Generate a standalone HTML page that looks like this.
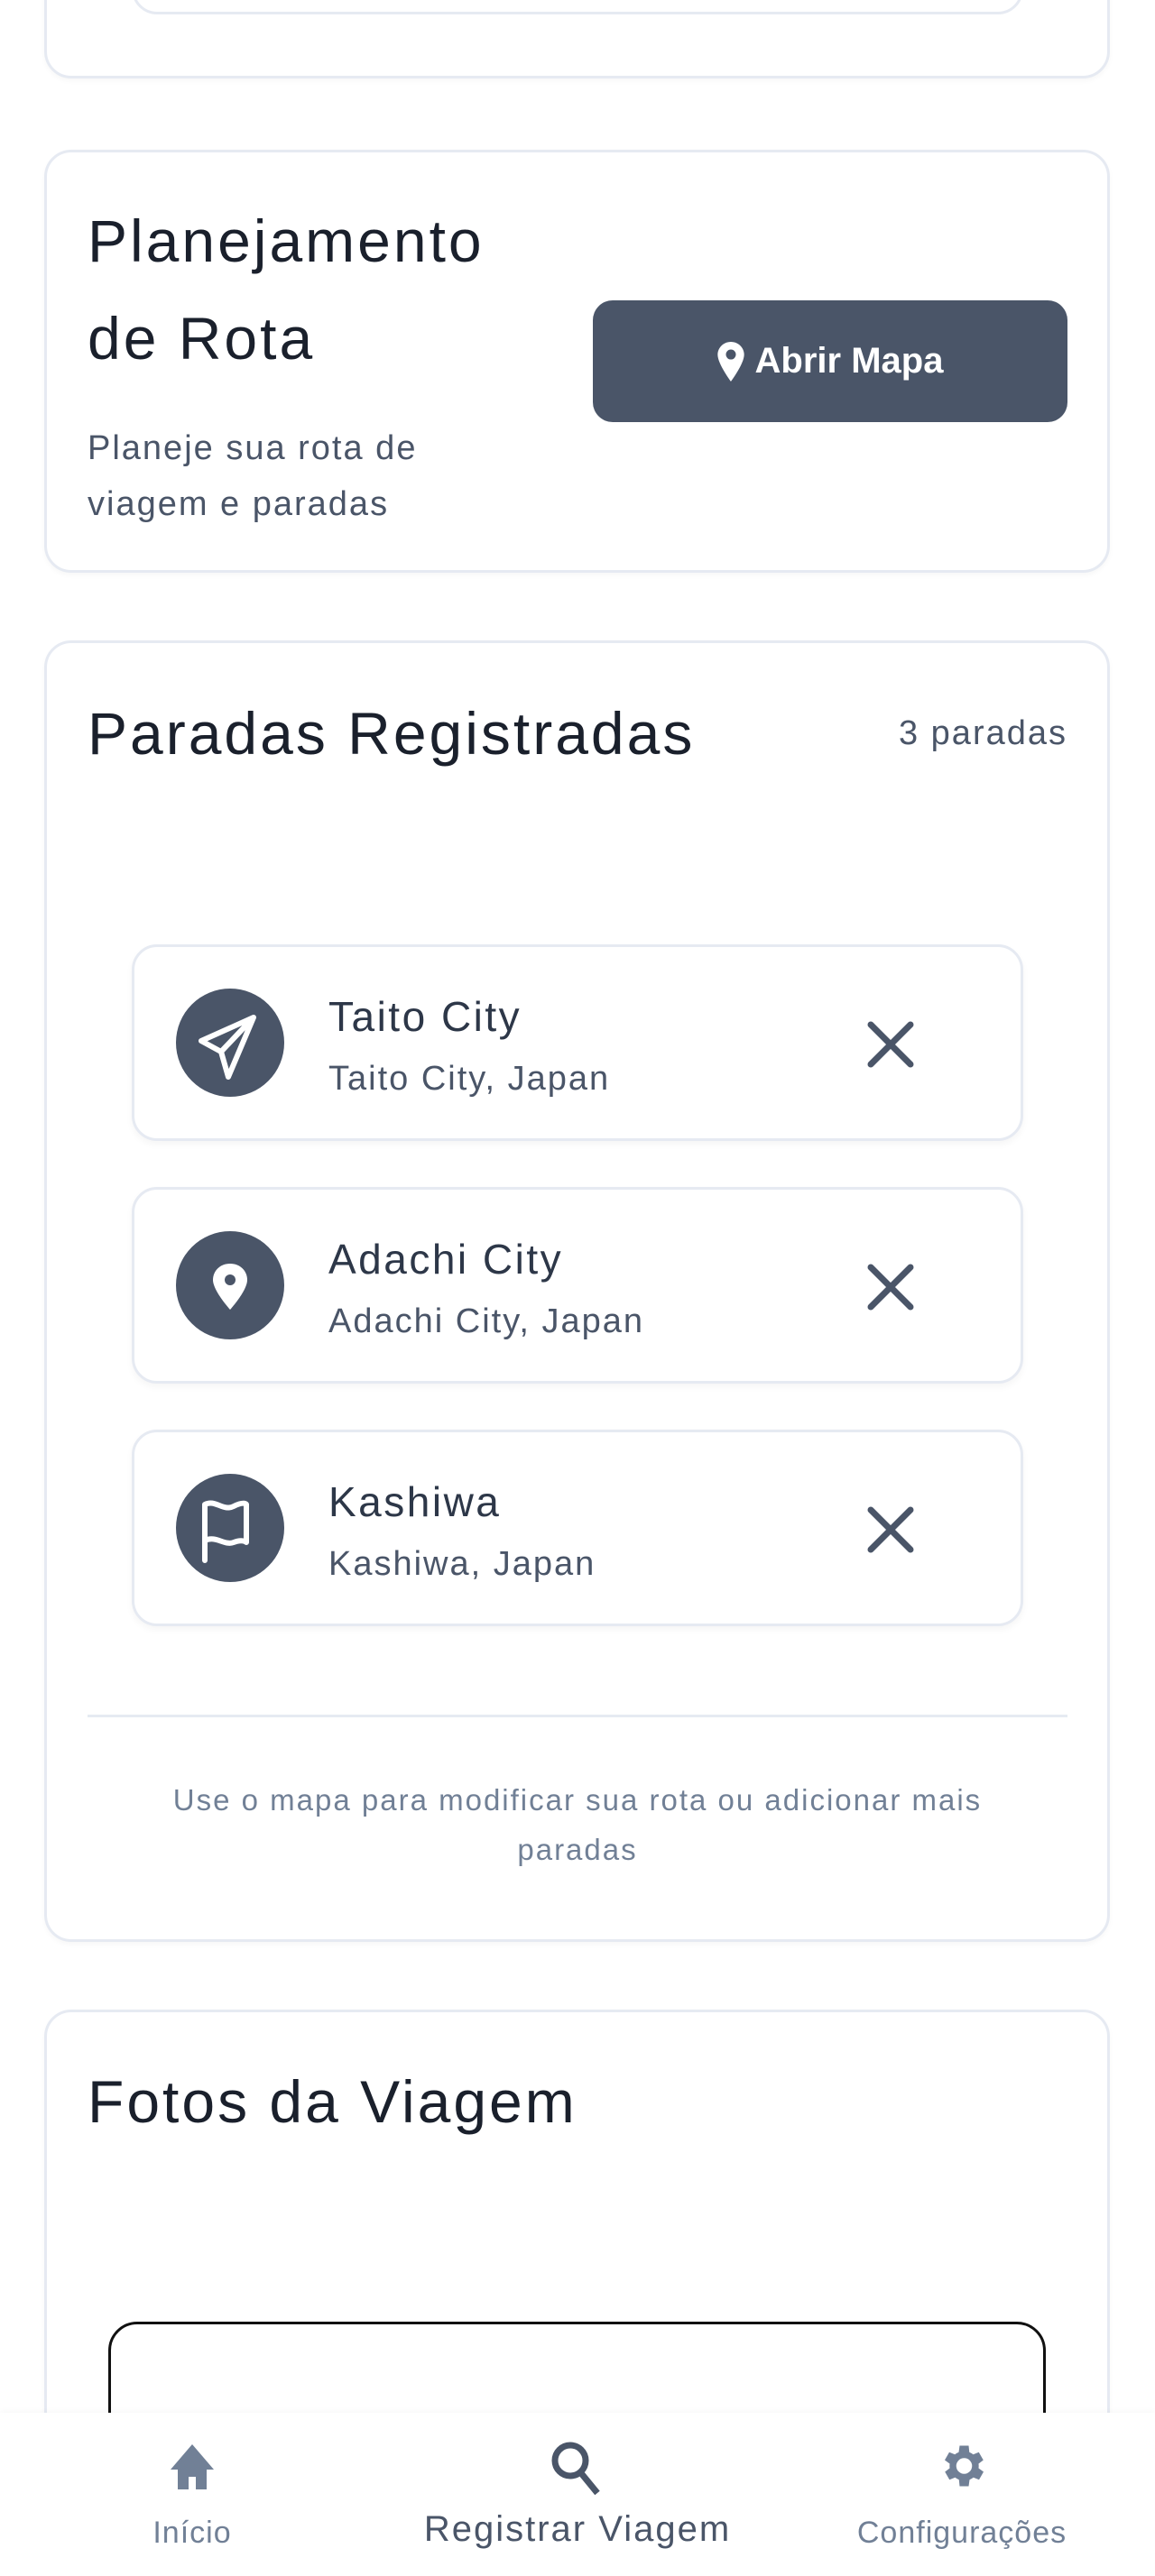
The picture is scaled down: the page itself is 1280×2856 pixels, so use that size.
<!DOCTYPE html>
<html style="overflow:hidden;height:2856px"><head><meta charset="utf-8"><style>
*{box-sizing:border-box;margin:0;padding:0}
html,body{width:1280px;height:2856px;overflow:hidden}
body{background:#fff;font-family:"Liberation Sans",sans-serif;color:#1a202c}
#w{position:relative;width:1280px;height:2856px;overflow:hidden}
.card{position:absolute;left:49px;width:1181px;border:3px solid #e6eaf2;border-radius:30px;background:#fff;box-shadow:0 3px 6px rgba(0,0,0,.03)}
.t{position:absolute;white-space:nowrap}
.title{font-size:66px;color:#1a202c;letter-spacing:3px}
.stop{position:absolute;left:146px;width:988px;height:218px;border:3px solid #e6eaf2;border-radius:28px;background:#fff;box-shadow:0 4px 8px rgba(0,0,0,.04)}
.circ{position:absolute;left:46px;top:46px;width:120px;height:120px;border-radius:50%;background:#4a5568}
.nm{position:absolute;left:215px;top:50px;font-size:46px;color:#2d3748;letter-spacing:2.5px}
.sb{position:absolute;left:215px;top:125px;font-size:38px;color:#4a5568;letter-spacing:2px}
.x{position:absolute;left:810px;top:80px}
</style></head><body><div id="w">
<div class="card" style="top:-40px;height:127px"></div>
<div style="position:absolute;left:146px;top:-40px;width:988px;height:56px;border:3px solid #e6eaf2;border-radius:28px"></div>

<div class="card" style="top:166px;height:469px"></div>
<div class="t title" style="left:97px;top:229px">Planejamento</div>
<div class="t title" style="left:97px;top:337px">de Rota</div>
<div class="t" style="left:97px;top:466px;font-size:38px;color:#4a5568;line-height:62px;letter-spacing:2px">Planeje sua rota de<br>viagem e paradas</div>
<div style="position:absolute;left:657px;top:333px;width:526px;height:135px;background:#4a5568;border-radius:22px;display:flex;align-items:center;justify-content:center;color:#fff;font-size:40px;font-weight:bold">
<svg width="30" height="44" viewBox="0 0 24 36" style="margin-right:12px"><path d="M12 0C5.4 0 0 5.2 0 11.6 0 20 12 36 12 36s12-16 12-24.4C24 5.2 18.6 0 12 0zm0 16a4.5 4.5 0 1 1 0-9 4.5 4.5 0 0 1 0 9z" fill="#fff"/></svg>Abrir Mapa</div>

<div class="card" style="top:710px;height:1443px"></div>
<div class="t title" style="left:97px;top:775px">Paradas Registradas</div>
<div class="t" style="right:97px;top:792px;font-size:38px;color:#4a5568;letter-spacing:2px">3 paradas</div>

<div class="stop" style="top:1047px"><div class="circ"><svg width="120" height="120" viewBox="0 0 120 120"><path d="M86 32 L28 58 L50 70 L58 98 Z M50 70 L86 32" fill="none" stroke="#fff" stroke-width="6" stroke-linejoin="round" stroke-linecap="round"/></svg></div><div class="nm">Taito City</div><div class="sb">Taito City, Japan</div><svg class="x" width="56" height="56"><path d="M6 6L50 50M50 6L6 50" stroke="#4a5568" stroke-width="7" stroke-linecap="round"/></svg></div>
<div class="stop" style="top:1316px"><div class="circ"><svg width="120" height="120" viewBox="0 0 120 120"><path d="M60 36c-11 0-19 8-19 18 0 12 19 33 19 33s19-21 19-33c0-10-8-18-19-18z" fill="#fff"/><circle cx="60" cy="54" r="6" fill="#4a5568"/></svg></div><div class="nm">Adachi City</div><div class="sb">Adachi City, Japan</div><svg class="x" width="56" height="56"><path d="M6 6L50 50M50 6L6 50" stroke="#4a5568" stroke-width="7" stroke-linecap="round"/></svg></div>
<div class="stop" style="top:1585px"><div class="circ"><svg width="120" height="120" viewBox="0 0 120 120"><path d="M32 96V34c12-6 20 8 32 2s14-2 14-2v42s-4-4-14 0-20-8-32-2" fill="none" stroke="#fff" stroke-width="6" stroke-linejoin="round" stroke-linecap="round"/></svg></div><div class="nm">Kashiwa</div><div class="sb">Kashiwa, Japan</div><svg class="x" width="56" height="56"><path d="M6 6L50 50M50 6L6 50" stroke="#4a5568" stroke-width="7" stroke-linecap="round"/></svg></div>

<div style="position:absolute;left:97px;top:1901px;width:1086px;height:3px;background:#e6eaf2"></div>
<div class="t" style="left:97px;width:1086px;top:1968px;text-align:center;font-size:33px;line-height:55px;color:#718096;letter-spacing:2px;white-space:normal">Use o mapa para modificar sua rota ou adicionar mais<br>paradas</div>

<div class="card" style="top:2228px;height:700px"></div>
<div class="t title" style="left:97px;top:2292px">Fotos da Viagem</div>
<div style="position:absolute;left:120px;top:2574px;width:1039px;height:300px;border:3px solid #111;border-radius:32px"></div>

<div style="position:absolute;left:0;top:2675px;width:1280px;height:181px;background:#fff;box-shadow:0 -2px 6px rgba(0,0,0,.03)"></div>
<svg style="position:absolute;left:183px;top:2704px" width="60" height="60" viewBox="0 0 60 60"><path d="M30 6L6 34h8v22h12V42h8v14h12V34h8z" fill="#718096"/></svg>
<svg style="position:absolute;left:604px;top:2700px" width="70" height="70" viewBox="0 0 70 70"><circle cx="28" cy="28" r="17" fill="none" stroke="#4a5568" stroke-width="7"/><path d="M40 42L58 64" stroke="#4a5568" stroke-width="7"/></svg>
<svg style="position:absolute;left:1036px;top:2703px" width="60" height="62" viewBox="0 0 24 24"><path fill="#718096" d="M19.4 13a7.5 7.5 0 0 0 0-2l2.1-1.6-2-3.5-2.5 1a7 7 0 0 0-1.7-1L15 3h-4l-.4 2.9a7 7 0 0 0-1.7 1l-2.5-1-2 3.5L6.6 11a7.5 7.5 0 0 0 0 2l-2.1 1.6 2 3.5 2.5-1a7 7 0 0 0 1.7 1L11 21h4l.4-2.9a7 7 0 0 0 1.7-1l2.5 1 2-3.5zM13 15.5a3.5 3.5 0 1 1 0-7 3.5 3.5 0 0 1 0 7z"/></svg>
<div class="t" style="left:113px;width:200px;text-align:center;top:2789px;font-size:34px;color:#718096;letter-spacing:1px">Início</div>
<div class="t" style="left:390px;width:500px;text-align:center;top:2782px;font-size:40px;color:#4a5568;letter-spacing:2px">Registrar Viagem</div>
<div class="t" style="left:916px;width:300px;text-align:center;top:2789px;font-size:34px;color:#718096;letter-spacing:1px">Configurações</div>
</div></body></html>
